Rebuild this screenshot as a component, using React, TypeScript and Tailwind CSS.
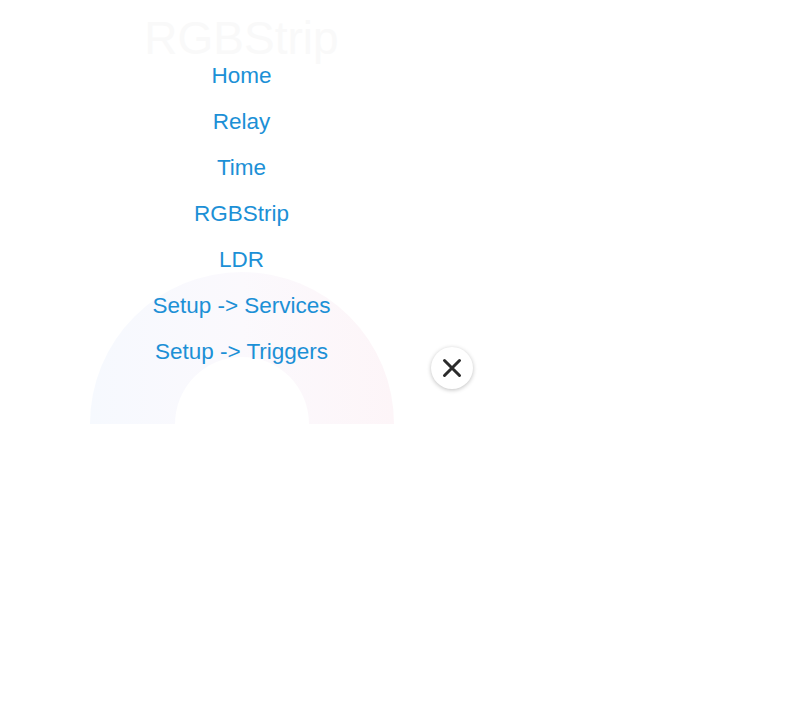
import React from "react";

const items = [
  "Home",
  "Relay",
  "Time",
  "RGBStrip",
  "LDR",
  "Setup -> Services",
  "Setup -> Triggers",
];

export default function App() {
  return (
    <div
      className="relative w-[805px] h-[705px] bg-white overflow-hidden"
      style={{ fontFamily: '"Liberation Sans", Arial, sans-serif' }}
    >
      {/* faded page content behind the menu */}
      <div className="w-[483px] flex flex-col items-center">
        <div className="mt-[18px] text-[46px] leading-[40px] text-[#f9f9f9]">RGBStrip</div>
        <svg width="304" height="154" viewBox="0 0 304 154" className="mt-[212px]">
          <defs>
            <linearGradient id="g" x1="0" y1="0" x2="1" y2="0">
              <stop offset="0" stopColor="#f6f9fe" />
              <stop offset="0.5" stopColor="#fbf9fd" />
              <stop offset="1" stopColor="#fdf5f8" />
            </linearGradient>
          </defs>
          <path
            d="M0 154 A152 152 0 0 1 304 154 L219 154 A67 67 0 0 0 85 154 Z"
            fill="url(#g)"
          />
        </svg>
      </div>

      {/* menu overlay */}
      <div className="absolute inset-0">
        <nav className="w-[483px] pt-[61px] flex flex-col items-center gap-[16px]">
          {items.map((t) => (
            <a
              key={t}
              className="block text-[22.5px] leading-[30px] text-[#1c90d6] text-center"
            >
              {t}
            </a>
          ))}
        </nav>
        <button className="absolute left-[431px] top-[347px] w-[42px] h-[42px] rounded-full bg-white shadow-[0_1px_4px_rgba(0,0,0,0.25)] flex items-center justify-center">
          <svg width="20" height="20" viewBox="0 0 20 20">
            <path d="M2.5 2.5 L17.5 17.5 M17.5 2.5 L2.5 17.5" stroke="#2b2b2b" strokeWidth="3" strokeLinecap="round" />
          </svg>
        </button>
      </div>
    </div>
  );
}
